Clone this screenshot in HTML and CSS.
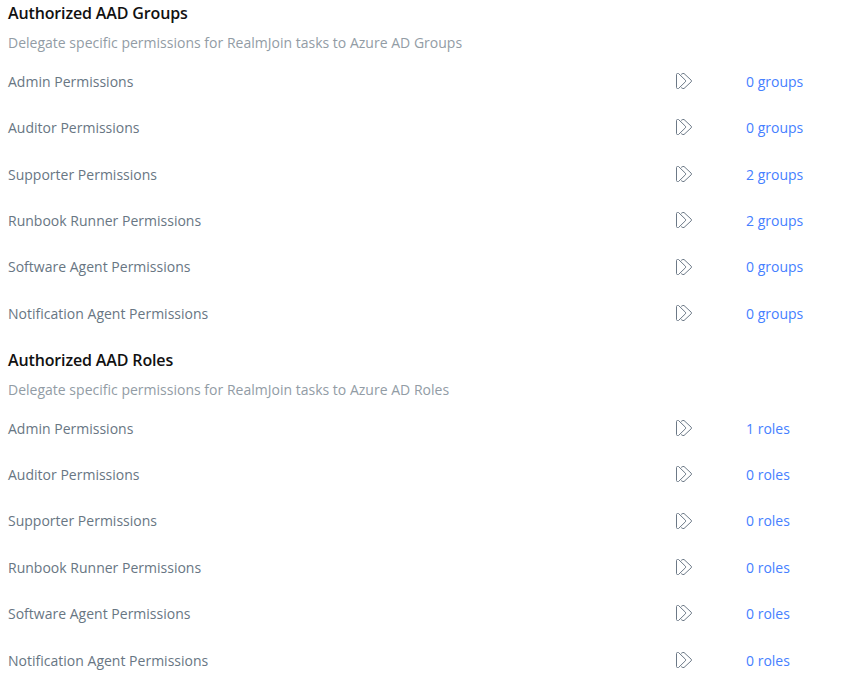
FILE: index.html
```html
<!DOCTYPE html>
<html lang="en">
<head>
<meta charset="utf-8">
<title>Authorized AAD Groups</title>
<link rel="stylesheet" href="styles.css">
</head>
<body>
<svg class="sprite" aria-hidden="true"><symbol id="forward" viewBox="0 0 18 18"><path d="M1.5 2.5Q1.5 1.5 2.5 1.5H3.5L10.4 8.2Q11.2 9 10.4 9.8L3.5 16.5H2.5Q1.5 16.5 1.5 15.5Z M6.7 2.8V2.2Q6.7 1.5 7.5 1.5H9L16.2 8.2Q17 9 16.2 9.8L9 16.5H7.5Q6.7 16.5 6.7 15.8V15.2"/></symbol></svg>
<main>
<section>
<h2>Authorized AAD Groups</h2>
<p class="description">Delegate specific permissions for RealmJoin tasks to Azure AD Groups</p>
<ul>
<li><span>Admin Permissions</span><svg class="icon"><use href="#forward"/></svg><a>0 groups</a></li>
<li><span>Auditor Permissions</span><svg class="icon"><use href="#forward"/></svg><a>0 groups</a></li>
<li><span>Supporter Permissions</span><svg class="icon"><use href="#forward"/></svg><a>2 groups</a></li>
<li><span>Runbook Runner Permissions</span><svg class="icon"><use href="#forward"/></svg><a>2 groups</a></li>
<li><span>Software Agent Permissions</span><svg class="icon"><use href="#forward"/></svg><a>0 groups</a></li>
<li><span>Notification Agent Permissions</span><svg class="icon"><use href="#forward"/></svg><a>0 groups</a></li>
</ul>
</section>
<section>
<h2>Authorized AAD Roles</h2>
<p class="description">Delegate specific permissions for RealmJoin tasks to Azure AD Roles</p>
<ul>
<li><span>Admin Permissions</span><svg class="icon"><use href="#forward"/></svg><a>1 roles</a></li>
<li><span>Auditor Permissions</span><svg class="icon"><use href="#forward"/></svg><a>0 roles</a></li>
<li><span>Supporter Permissions</span><svg class="icon"><use href="#forward"/></svg><a>0 roles</a></li>
<li><span>Runbook Runner Permissions</span><svg class="icon"><use href="#forward"/></svg><a>0 roles</a></li>
<li><span>Software Agent Permissions</span><svg class="icon"><use href="#forward"/></svg><a>0 roles</a></li>
<li><span>Notification Agent Permissions</span><svg class="icon"><use href="#forward"/></svg><a>0 roles</a></li>
</ul>
</section>
</main>
</body>
</html>
```
FILE: styles.css
```css
* { box-sizing: border-box; }
body { margin: 0; background: #fff; color: #687683; font: 14px/20px "Open Sans", sans-serif; letter-spacing: 0.01px; overflow: hidden; }
main { padding: 1px 8px 0; }
.sprite { display: none; }
section { height: 346.9px; }
h2 { margin: 0; color: #111; font-size: 16px; font-weight: 600; line-height: 24px; letter-spacing: -0.14px; }
.description { margin: 8px 0 0; color: #929ca5; line-height: 20px; }
ul { list-style: none; margin: 5.67px 0 0; padding: 0; }
li { display: grid; grid-template-columns: 667px 71px 1fr; align-items: center; height: 46.36px; }
.icon { width: 18px; height: 18px; margin-bottom: 1.5px; fill: none; stroke: #6c7987; stroke-width: 1; }
a { color: #4680ff; }
```
